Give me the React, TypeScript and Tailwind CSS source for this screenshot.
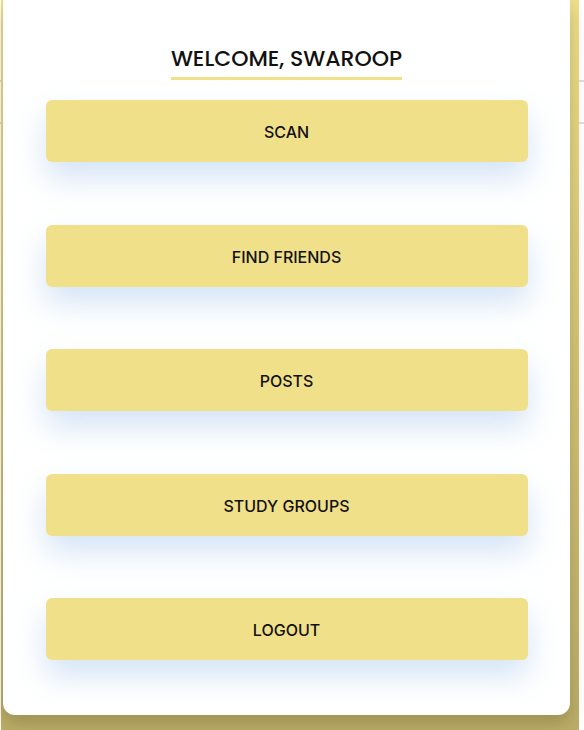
const items = ["SCAN", "FIND FRIENDS", "POSTS", "STUDY GROUPS", "LOGOUT"];

export default function App() {
  return (
    <div className="flex h-[730px] overflow-hidden bg-white">
      {/* left page edge */}
      <div className="w-px shrink-0">
        <div className="mt-[80px] h-[2px] bg-[#dadada]" />
        <div className="mt-[40px] h-[2px] bg-[#dadada]" />
      </div>

      {/* gold frame */}
      <div className="flex w-[578px] shrink-0 flex-col bg-gradient-to-b from-[#f1e08a] via-[#d6c577] to-[#bcae69] pb-[15px] pl-[2px] pr-[9px]">
        <div className="flex flex-1 flex-col items-center rounded-b-xl bg-white pt-[44px] shadow-[0_8px_18px_rgba(60,50,10,0.25)]">
          <h1 className="border-b-[3px] border-[#f1e08a] pb-[3px] font-['Poppins','Lato',sans-serif] text-[22px] font-medium leading-[30px] tracking-normal text-[#111]">
            WELCOME, SWAROOP
          </h1>

          <div className="mt-[20px] flex w-[482px] flex-col gap-[62.5px]">
            {items.map((label) => (
              <button
                key={label}
                className="flex h-[62px] items-center justify-center rounded-md bg-[#f1e08a] pt-[2px] font-['Inter',sans-serif] text-[16px] font-[450] text-[#111] shadow-[0_16px_30px_rgba(160,195,235,0.45)]"
              >
                {label}
              </button>
            ))}
          </div>
        </div>
      </div>

      {/* right page edge */}
      <div className="flex-1">
        <div className="mt-[80px] h-[2px] bg-[#dadada]" />
        <div className="mt-[40px] h-[2px] bg-[#dadada]" />
      </div>
    </div>
  );
}
